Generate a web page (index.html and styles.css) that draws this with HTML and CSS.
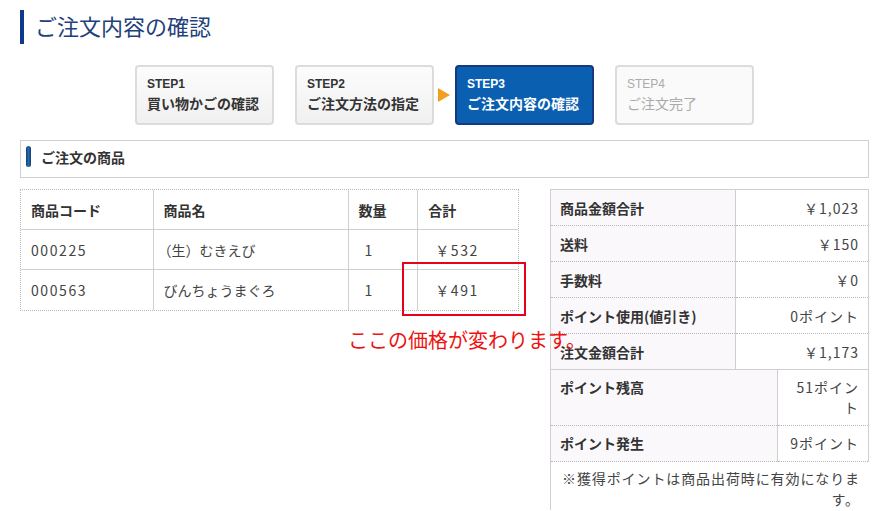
FILE: index.html
```html
<!DOCTYPE html>
<html lang="ja">
<head>
<meta charset="utf-8">
<link rel="stylesheet" href="styles.css">
</head>
<body>
<div class="page">
  <h1 class="title">ご注文内容の確認</h1>

  <div class="steps">
    <div class="step"><span class="step-no">STEP1</span><span class="step-name">買い物かごの確認</span></div>
    <div class="step"><span class="step-no">STEP2</span><span class="step-name">ご注文方法の指定</span></div>
    <div class="arrow"></div>
    <div class="step current"><span class="step-no">STEP3</span><span class="step-name">ご注文内容の確認</span></div>
    <div class="step future"><span class="step-no">STEP4</span><span class="step-name">ご注文完了</span></div>
  </div>

  <div class="section-head"><span class="section-bar"></span><span class="section-text">ご注文の商品</span></div>

  <div class="content">
    <div class="left">
      <table class="items">
        <thead>
          <tr><th class="c1">商品コード</th><th class="c2">商品名</th><th class="c3">数量</th><th class="c4">合計</th></tr>
        </thead>
        <tbody>
          <tr><td class="num">000225</td><td class="name">（生）むきえび</td><td class="num qty">1</td><td class="num price">￥532</td></tr>
          <tr><td class="num">000563</td><td>びんちょうまぐろ</td><td class="num qty">1</td><td class="num price">￥491</td></tr>
        </tbody>
      </table>
      <div class="red-box"></div>
      <div class="red-note">ここの価格が変わります。</div>
    </div>

    <div class="right">
      <table class="sum">
        <tr><th>商品金額合計</th><td>￥1,023</td></tr>
        <tr><th>送料</th><td>￥150</td></tr>
        <tr><th>手数料</th><td>￥0</td></tr>
        <tr><th>ポイント使用(値引き)</th><td>0ポイント</td></tr>
        <tr class="last"><th>注文金額合計</th><td>￥1,173</td></tr>
      </table>
      <table class="points">
        <tr class="tall"><th>ポイント残高</th><td>51ポイント</td></tr>
        <tr><th>ポイント発生</th><td>9ポイント</td></tr>
      </table>
      <p class="note">※獲得ポイントは商品出荷時に有効になります。</p>
    </div>
  </div>
</div>
</body>
</html>
```

FILE: styles.css
```css
body {
  margin: 0;
  background: #fff;
  font-family: "Noto Sans CJK JP", "Noto Sans", sans-serif;
  color: #333;
}
.page {
  width: 849px;
  padding: 10px 0 0 20px;
}
.title {
  margin: 0;
  height: 34px;
  border-left: 4px solid #0d3a8a;
  padding-left: 11px;
  font-size: 22px;
  font-weight: normal;
  line-height: 30px;
  color: #22417a;
}
.steps {
  display: flex;
  margin: 21px 0 0 115px;
  height: 60px;
}
.step {
  box-sizing: border-box;
  width: 139px;
  height: 60px;
  margin-right: 21px;
  border: 2px solid #dcdcdc;
  border-radius: 4px;
  background: linear-gradient(#fcfcfc, #f0f0f0);
  padding: 10px 0 0 10px;
  display: flex;
  flex-direction: column;
  color: #333;
}
.step-no {
  font-family: "Liberation Sans", Arial, sans-serif;
  font-weight: bold;
  font-size: 12px;
  line-height: 14px;
}
.step-name {
  font-weight: bold;
  font-size: 14px;
  line-height: 20px;
  margin-top: 2px;
}
.step.current {
  background: #0b5fb0;
  border-color: #15397c;
  color: #fff;
}
.step.future {
  background: #fafafa;
  color: #aaa;
}
.step.future .step-no,
.step.future .step-name { font-weight: normal; }
.arrow {
  width: 0;
  height: 0;
  margin: 23px 0 0 -17px;
  margin-right: 5px;
  border-top: 7px solid transparent;
  border-bottom: 7px solid transparent;
  border-left: 12px solid #f0a01e;
}
.section-head {
  box-sizing: border-box;
  margin-top: 15px;
  height: 38px;
  border: 1px solid #cfcfcf;
  display: flex;
  align-items: flex-start;
  padding: 5px 0 0 5px;
}
.section-bar {
  width: 5px;
  height: 21px;
  border-radius: 3px;
  background: linear-gradient(90deg, #0e3f78, #2a6aa8, #0e3f78);
}
.section-text {
  margin-left: 10px;
  font-weight: bold;
  font-size: 14px;
  line-height: 22px;
  color: #333;
}
.content {
  display: flex;
  margin-top: 11px;
  justify-content: space-between;
}
.left {
  position: relative;
  width: 499px;
}
.items {
  border-collapse: separate;
  border-spacing: 0;
  width: 499px;
  border: 1px dotted #b8b8b8;
  font-size: 14px;
}
.items th, .items td {
  height: 40px;
  padding: 0 0 0 10px;
  text-align: left;
  border-right: 1px solid #cfcfcf;
  border-bottom: 1px solid #cfcfcf;
  box-sizing: border-box;
}
.items th:last-child, .items td:last-child { border-right: none; }
.items tbody tr:last-child td { border-bottom: none; height: 40px; }
.items th { font-weight: bold; color: #333; }
.items .c1 { width: 133px; }
.items .c2 { width: 196px; }
.items .c3 { width: 70px; }
.items .c4 { width: 100px; }
.items td { color: #444; }
.items .num { letter-spacing: 1.6px; }
.items .name { padding-left: 4px; }
.items .qty { padding-left: 16px; }
.items .price { padding-left: 17px; }
.red-box {
  position: absolute;
  left: 382px;
  top: 73px;
  width: 120px;
  height: 50px;
  border: 2px solid #e8001c;
}
.red-note {
  position: absolute;
  left: 328px;
  top: 139px;
  font-size: 20px;
  line-height: 24px;
  color: #ee1111;
  white-space: nowrap;
  z-index: 2;
}
.right {
  width: 319px;
}
.sum, .points {
  width: 319px;
  border-collapse: collapse;
  font-size: 14px;
}
.sum th, .sum td, .points th, .points td {
  border: 1px solid #cfcfcf;
  border-top: 1px dotted #b8b8b8;
  border-bottom: 1px dotted #b8b8b8;
  height: 36px;
  box-sizing: border-box;
  padding: 0 9px;
  vertical-align: middle;
}
.sum tr:first-child th, .sum tr:first-child td { border-top: 1px solid #cfcfcf; }
.sum tr.last th, .sum tr.last td { border-bottom: 1px solid #cfcfcf; }
.sum th, .points th {
  text-align: left;
  font-weight: bold;
  background: #faf8fa;
  color: #333;
}
.sum td, .points td {
  text-align: right;
  color: #444;
  letter-spacing: 1px;
}
.sum th { width: 185px; }
.points th { width: 227px; }
.points tr:first-child th, .points tr:first-child td { border-top: none; }
.points tr.tall th, .points tr.tall td {
  height: 55px;
  vertical-align: top;
  padding-top: 7px;
  line-height: 20px;
}
.note {
  margin: 0;
  border-left: 1px solid #cfcfcf;
  padding: 6px 9px 0 10px;
  font-size: 14px;
  line-height: 21px;
  text-align: right;
  color: #444;
  letter-spacing: 0.9px;
}
```
